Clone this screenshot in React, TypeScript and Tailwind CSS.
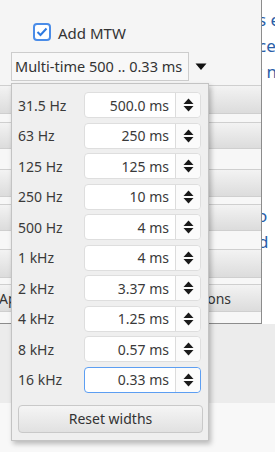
import React from 'react';

const rows: [string, string][] = [
  ['31.5 Hz', '500.0 ms'],
  ['63 Hz', '250 ms'],
  ['125 Hz', '125 ms'],
  ['250 Hz', '10 ms'],
  ['500 Hz', '4 ms'],
  ['1 kHz', '4 ms'],
  ['2 kHz', '3.37 ms'],
  ['4 kHz', '1.25 ms'],
  ['8 kHz', '0.57 ms'],
  ['16 kHz', '0.33 ms'],
];

const SpinArrows = () => (
  <svg width="11" height="14" viewBox="0 0 11 14">
    <path d="M5.5 0.5 L10.5 6 L0.5 6 Z" fill="#1a1a1a" />
    <path d="M0.5 8 L10.5 8 L5.5 13.5 Z" fill="#1a1a1a" />
  </svg>
);

const Band = ({ h, children }: { h: string; children?: React.ReactNode }) => (
  <div
    className={`${h} flex items-center justify-between border-y border-[#cfcfcf] bg-gradient-to-b from-[#f3f3f3] to-[#dcdcdc] text-[14px] text-[#333]`}
  >
    {children}
  </div>
);

const Gap = ({ h }: { h: string }) => <div className={`${h} bg-[#f7f7f7]`} />;

export default function App() {
  return (
    <div className="relative w-[275px] h-[452px] overflow-hidden bg-[#ececec] font-['Noto_Sans',sans-serif] text-[#333]">
      {/* Background window */}
      <div className="flex h-[324px]">
        <div className="w-[262px] flex flex-col border-r border-b border-[#8c8c8c] bg-[#f5f5f5]">
          <div className="h-[85px] relative">
            <div className="flex items-center gap-[7px] pl-[33px] pt-[23px]">
              <div className="w-[18px] h-[18px] rounded-[4px] border-2 border-[#4a8ce8] bg-white flex items-center justify-center">
                <svg width="12" height="10" viewBox="0 0 12 10">
                  <path d="M1.5 5 L4.5 8 L10.5 1.5" stroke="#2f7ae0" strokeWidth="2" fill="none" />
                </svg>
              </div>
              <span className="text-[15px] leading-none pt-[2px]">Add MTW</span>
            </div>
            <div className="flex items-center mt-[11px] ml-[11px]">
              <div className="w-[178px] h-[29px] border border-[#cdcdcd] bg-[#f8f8f8] flex items-center pl-[3px] text-[14.5px] whitespace-nowrap">
                Multi-time 500 .. 0.33 ms
              </div>
              <svg className="ml-[6px]" width="12" height="8" viewBox="0 0 12 8">
                <path d="M0.5 0.5 L11.5 0.5 L6 7 Z" fill="#111" />
              </svg>
            </div>
          </div>
          <Band h="h-[29px]" />
          <Gap h="h-[8px]" />
          <Band h="h-[27px]" />
          <Gap h="h-[20px]" />
          <Band h="h-[28px]" />
          <Gap h="h-[7px]" />
          <Band h="h-[27px]" />
          <Gap h="h-[18px]" />
          <Band h="h-[29px]" />
          <Gap h="h-[6px]" />
          <Band h="h-[28px]">
            <span className="ml-[-1px]">Ap</span>
            <span className="mr-[30px]">Options</span>
          </Band>
          <div className="flex-1 bg-[#f7f7f7]" />
        </div>
        <div className="flex-1 bg-white overflow-hidden text-[17px] text-[#2a5ea8] leading-[26px]">
          <div className="ml-[-4px] pt-[7px] whitespace-nowrap">
            <div>s e</div>
            <div>ce</div>
            <div className="ml-[-3px]">r n</div>
            <div className="mt-[118px] ml-[-1px]">o</div>
            <div>d</div>
            <div className="ml-[2px] text-[9px] leading-[10px]">.</div>
          </div>
        </div>
      </div>
      <div className="h-[79px]" />
      <div className="h-[49px] bg-[#f8f8f8]" />

      {/* Popup */}
      <div className="absolute left-[11px] top-[83px] w-[198px] h-[358px] border border-[#c3c3c3] bg-[#efefef] shadow-[2px_3px_5px_rgba(0,0,0,0.25)] px-[6px] pt-[8px]">
        <div className="flex flex-col gap-[4.5px]">
          {rows.map(([label, value], i) => {
            const focused = i === rows.length - 1;
            return (
              <div key={label} className="flex items-center h-[26px]">
                <span className="w-[66px] text-[14px] text-[#3a3a3a] whitespace-nowrap">{label}</span>
                <div
                  className={`flex h-[26px] w-[117px] rounded-[4px] bg-white ${
                    focused ? 'border-[1.5px] border-[#5c9ef2]' : 'border border-[#dedede]'
                  }`}
                >
                  <div className="flex-1 flex items-center justify-end pr-[6px] text-[14px] text-[#3a3a3a] whitespace-nowrap">
                    {value}
                  </div>
                  <div className="w-[25px] border-l border-[#dcdcdc] flex items-center justify-center bg-[#fbfbfb] rounded-r-[4px]">
                    <SpinArrows />
                  </div>
                </div>
              </div>
            );
          })}
        </div>
        <button className="mt-[12px] w-[185px] h-[28px] rounded-[4px] border border-[#c9c9c9] bg-gradient-to-b from-[#f5f5f5] to-[#e1e1e1] text-[14px] text-[#333] flex items-center justify-center">
          Reset widths
        </button>
      </div>
    </div>
  );
}
